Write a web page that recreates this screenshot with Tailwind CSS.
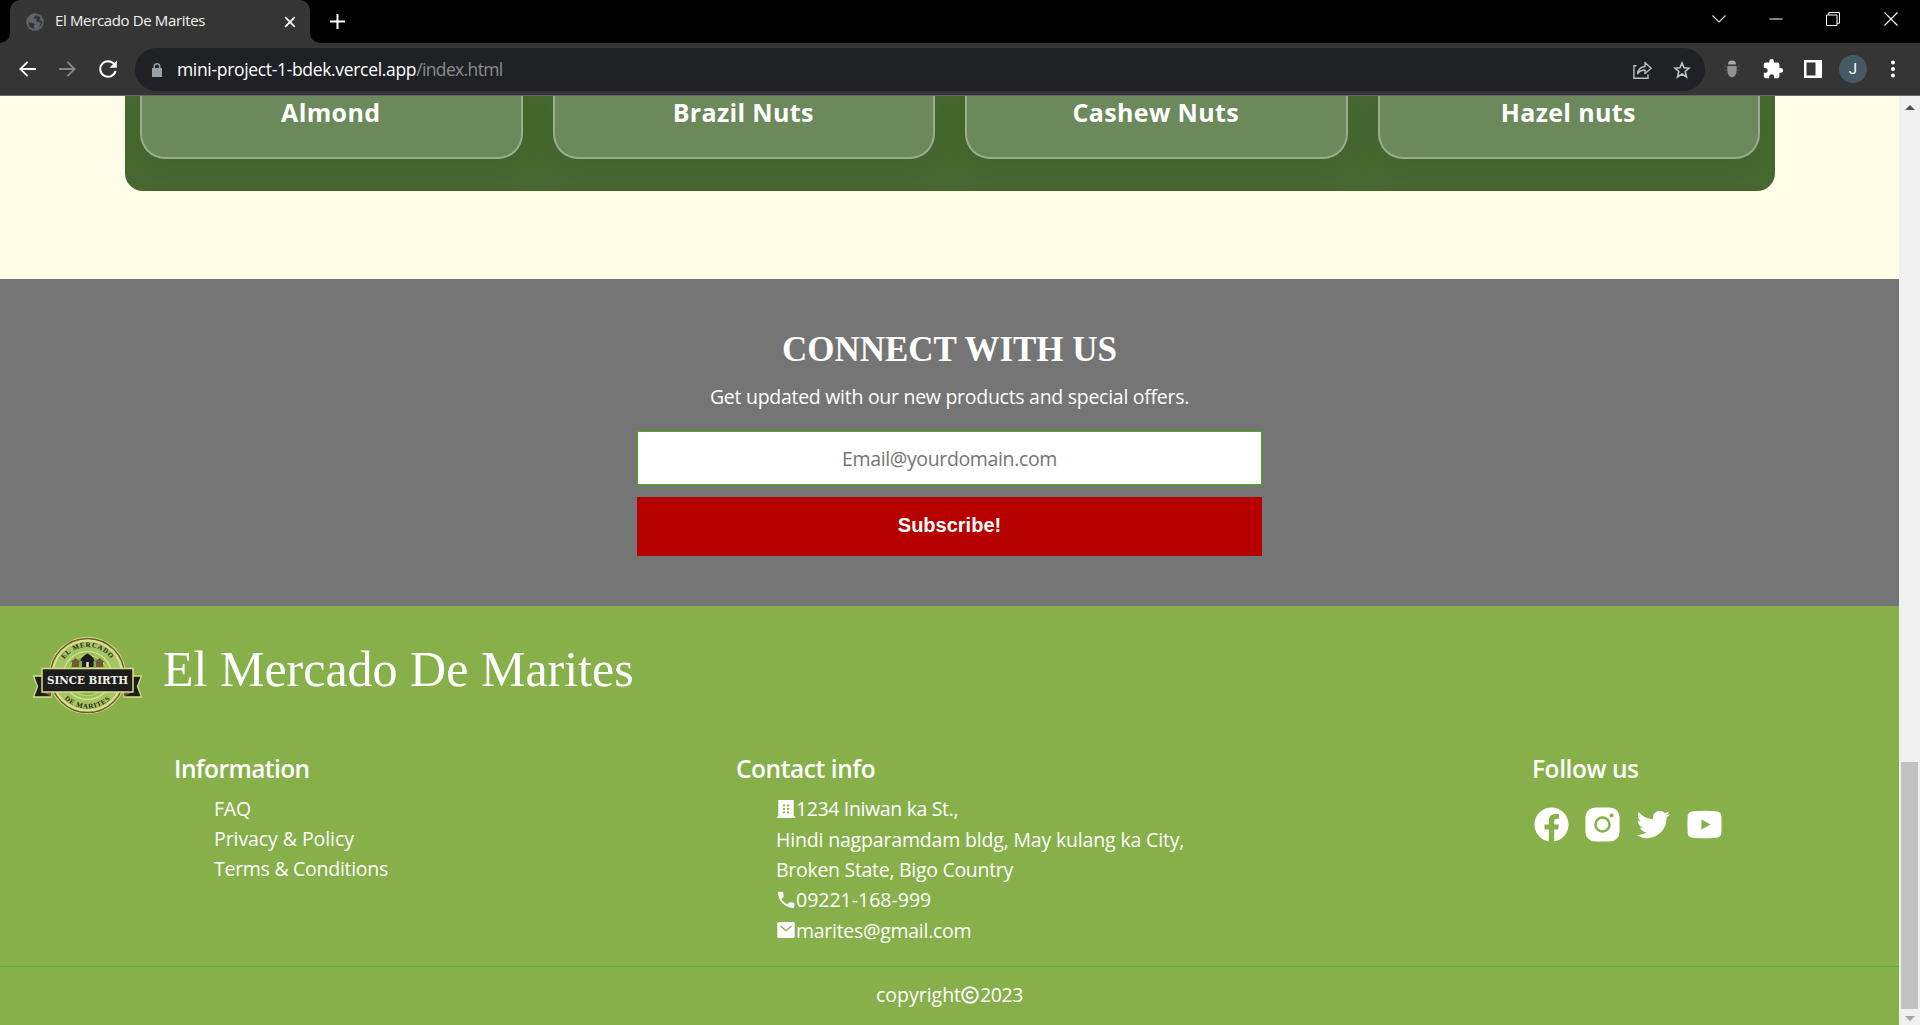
<!DOCTYPE html>
<html lang="en">
<head>
<meta charset="utf-8">
<title>El Mercado De Marites</title>
<script src="https://cdn.jsdelivr.net/npm/@tailwindcss/browser@4"></script>
</head>
<body class="w-[1920px] h-[1025px] overflow-hidden flex flex-col bg-black font-['Open_Sans',sans-serif] text-white">

<!-- Tab strip -->
<header class="h-[43px] shrink-0 flex bg-black">
  <svg class="w-[10px] h-[43px] shrink-0" viewBox="0 0 10 43"><path d="M10 33V43H0A10 10 0 0 0 10 33Z" fill="#353535"/></svg>
  <div class="w-[300px] h-[43px] rounded-t-[10px] bg-[#353535] flex items-center pl-4 pr-3">
    <svg class="w-[18px] h-[18px] shrink-0" viewBox="0 0 18 18"><circle cx="9" cy="9" r="8.8" fill="#5f6368"/><path d="M2.2 9.5 7 9.8 8.8 11.3 7.6 13.2 8.6 15.7A7 7 0 0 1 2.2 9.5ZM10.3 2.2C9.2 3.2 7.4 3.8 8 5.3 9 5.8 10.3 5 10.8 6.5 9.6 8 11 9 13 8.8L14.6 10.5 12.8 14.8A7 7 0 0 0 15.8 8L13.6 6.8 14.2 4.3A7 7 0 0 0 10.3 2.2Z" fill="#353535"/></svg>
    <span class="ml-[11px] text-[15px] leading-[40px] -mt-[3px] tracking-[-0.36px] text-[#f1f1f1] whitespace-nowrap">El Mercado De Marites</span>
    <svg class="ml-auto mr-[2px] w-[12px] h-[12px]" viewBox="0 0 12 12" stroke="#fff" stroke-width="1.8"><path d="M1.2 1.2 10.8 10.8M10.8 1.2 1.2 10.8"/></svg>
  </div>
  <svg class="w-[10px] h-[43px] shrink-0" viewBox="0 0 10 43"><path d="M0 33V43H10A10 10 0 0 1 0 33Z" fill="#353535"/></svg>
  <svg class="ml-[10px] mt-[14px] w-[15px] h-[15px]" viewBox="0 0 15 15" stroke="#fff" stroke-width="2"><path d="M7.5 0V15M0 7.5H15"/></svg>
  <div class="ml-auto flex h-[37px] items-center">
    <div class="w-[57px] flex justify-center"><svg class="w-[14px] h-[14px]" viewBox="0 0 14 14" fill="none" stroke="#ddd" stroke-width="1.1"><path d="M.5 3.5 7 10 13.500 3.500"/></svg></div>
    <div class="w-[57px] flex justify-center"><svg class="w-[14px] h-[14px]" viewBox="0 0 14 14"><path d="M.5 6.500H13.500V7.500H.5Z" fill="#fff"/></svg></div>
    <div class="w-[58px] flex justify-center"><svg class="w-[14px] h-[14px]" viewBox="0 0 14 14" fill="none" stroke="#fff"><path d="M.5 3V13.500H11V3ZM2.800 3V.5H13.500V11.200H11"/></svg></div>
    <div class="w-[58px] flex justify-center"><svg class="w-[14px] h-[14px]" viewBox="0 0 14 14" stroke="#fff" stroke-width="1.1"><path d="M.5.5 13.500 13.500M13.500.5.5 13.500"/></svg></div>
  </div>
</header>

<!-- Toolbar -->
<div class="h-[53px] shrink-0 bg-[#353535] border-b border-[#686868] flex items-start pt-[5px]">
  <div class="h-[43px] w-[135px] shrink-0 flex items-center pl-[19px]">
    <svg class="w-[17px] h-[16px] -mt-px" viewBox="0 0 17 16" fill="none" stroke="#fff" stroke-width="1.9"><path d="M17 8H1.500M8.600.8 1.400 8 8.600 15.200"/></svg>
    <svg class="ml-[23px] w-[17px] h-[16px] -mt-px" viewBox="0 0 17 16" fill="none" stroke="#858585" stroke-width="1.900"><path d="M0 8H15.500M8.400.8 15.600 8 8.400 15.200"/></svg>
    <svg class="ml-[23px] w-[18px] h-[18px] -mt-px" viewBox="0 0 18 18"><path d="M15.300 4.300A7.800 7.800 0 1 0 16.600 11" fill="none" stroke="#fff" stroke-width="2"/><path d="M17.800.6V7.800H10.600Z" fill="#fff"/></svg>
  </div>
  <div class="h-[43px] w-[1570px] shrink-0 rounded-full bg-[#202124] flex items-center pl-[17px] pr-[14px]">
    <svg class="w-[10px] h-[14px]" viewBox="0 0 10 14"><path d="M0 5H1.500V3.500A3.500 3.500 0 0 1 8.500 3.500V5H10V14H0ZM3 5H7V3.500A2 2 0 0 0 3 3.500Z" fill="#9aa0a6"/></svg>
    <p class="ml-[15px] text-[17.5px] leading-[43px] whitespace-nowrap tracking-[-0.33px]">mini-project-1-bdek.vercel.app<span class="text-[#8b8d90] tracking-[-0.63px]">/index.html</span></p>
    <svg class="ml-auto w-[19px] h-[18px]" viewBox="0 0 19 18" fill="none" stroke="#bdbdbd" stroke-width="1.400"><path d="M3.500 4.700H.9V17.200H15V13.500"/><path d="M4.500 12.800C5 8.500 7.500 6 12 5.500V1.500L18.200 7.200 12 12.500V9C8.500 9 6.500 10 4.500 12.800Z" stroke-linejoin="round"/></svg>
    <svg class="ml-[21px] w-[18px] h-[18px]" viewBox="0 0 18 18" fill="none" stroke="#c4c4c4" stroke-width="1.600"><path d="M9 1.900 11 6.700 16.200 7.100 12.200 10.500 13.500 15.900 9 13 4.500 15.900 5.800 10.500 1.800 7.100 7 6.700Z"/></svg>
  </div>
  <div class="h-[43px] flex items-center pl-[7px] -mt-px">
    <div class="w-10 flex justify-center"><svg class="w-4 h-[18px]" viewBox="0 0 16 18"><path d="M4 4.500A4 4 0 0 1 12 4.500Z" fill="#aaa"/><path d="M3.500 6H12.500C13.300 10 12.500 17 8 17.300 3.500 17 2.700 10 3.500 6Z" fill="#919191"/><path d="M0 5.500 3 7M16 5.500 13 7M0 10H3M16 10H13M.5 15 3.500 13M15.500 15 12.500 13" stroke="#505050"/></svg></div>
    <div class="w-[41px] flex justify-center"><svg class="w-[22px] h-[22px]" viewBox="0 0 24 24" fill="#fff"><path d="M20.500 11H19V7c0-1.100-.9-2-2-2h-4V3.500a2.500 2.500 0 0 0-5 0V5H4c-1.100 0-1.990.9-1.990 2v3.800H3.500c1.490 0 2.700 1.210 2.700 2.700s-1.210 2.700-2.700 2.700H2V20c0 1.100.9 2 2 2h3.800v-1.500c0-1.490 1.210-2.700 2.700-2.700 1.490 0 2.700 1.210 2.700 2.700V22H17c1.100 0 2-.9 2-2v-4h1.500a2.500 2.500 0 0 0 0-5z"/></svg></div>
    <div class="w-[40px] flex justify-center"><svg class="w-[18px] h-[18px]" viewBox="0 0 18 18"><path fill-rule="evenodd" d="M0 0H18V18H0ZM2.500 2.500V15.500H11.500V2.500Z" fill="#fff"/></svg></div>
    <div class="w-[40px] flex justify-center"><div class="w-7 h-7 rounded-full bg-[#455a64] text-center text-[15px] leading-[28px] font-['Roboto',sans-serif]">J</div></div>
    <div class="w-[40px] flex justify-center"><svg class="w-1 h-[18px]" viewBox="0 0 4 18" fill="#fff"><circle cx="2" cy="2.500" r="2"/><circle cx="2" cy="9" r="2"/><circle cx="2" cy="15.500" r="2"/></svg></div>
  </div>
</div>

<div class="flex h-[929px] shrink-0">
<main class="w-[1899px] shrink-0 bg-[#fffde8] flex flex-col">

  <!-- Products -->
  <section class="h-[183px] shrink-0 pl-[125px] pr-[124px]">
    <div class="h-[95px] rounded-b-[18px] bg-[#476930] flex overflow-hidden px-[15px] gap-[30px] text-center text-[25px] leading-[32px] font-bold tracking-[0.36px]">
      <div class="flex-1 h-[63px] rounded-b-[25px] border-2 border-t-0 border-[#9aad8e] bg-[#6c895c] shadow-[0_8px_32px_0_rgba(31,58,20,0.13)] pr-px">Almond</div>
      <div class="flex-1 h-[63px] rounded-b-[25px] border-2 border-t-0 border-[#9aad8e] bg-[#6c895c] shadow-[0_8px_32px_0_rgba(31,58,20,0.13)] pr-px">Brazil Nuts</div>
      <div class="flex-1 h-[63px] rounded-b-[25px] border-2 border-t-0 border-[#9aad8e] bg-[#6c895c] shadow-[0_8px_32px_0_rgba(31,58,20,0.13)] pr-px">Cashew Nuts</div>
      <div class="flex-1 h-[63px] rounded-b-[25px] border-2 border-t-0 border-[#9aad8e] bg-[#6c895c] shadow-[0_8px_32px_0_rgba(31,58,20,0.13)] pr-px">Hazel nuts</div>
    </div>
  </section>

  <!-- Newsletter -->
  <section class="h-[327px] shrink-0 bg-[#757575] flex flex-col items-center pt-[51px]">
    <h2 class="font-['Liberation_Serif',serif] font-bold text-[35px] leading-[40px]">CONNECT WITH US</h2>
    <p class="mt-[11px] text-[19.5px] leading-[32px] tracking-[-0.28px]">Get updated with our new products and special offers.</p>
    <div class="mt-[18px] w-[625px] h-[54px] border border-[#42b300] bg-white text-[#757575] text-center text-[19.5px] leading-[53px] tracking-[-0.36px]">Email@yourdomain.com</div>
    <button class="mt-3 w-[625px] h-[59px] pb-[3px] bg-[#b60000] font-['Liberation_Sans',sans-serif] font-bold text-[20px] leading-[56px]">Subscribe!</button>
  </section>

  <!-- Footer -->
  <footer class="h-[419px] shrink-0 bg-[#87b04a] flex flex-col">
    <div class="flex pt-[29px] pl-[32px] h-[146px] shrink-0">
      <svg class="w-[111px] h-[81px] shrink-0" viewBox="0 0 111 81">
        <defs><path id="arcTop" d="M27.500 40A28 28 0 0 1 83.500 40"/><path id="arcBot" d="M22.500 40.500A33 33 0 0 0 88.500 40.500"/></defs>
        <circle cx="55.500" cy="40.500" r="38.800" fill="#d7dd8b"/>
        <circle cx="55.500" cy="40.500" r="37" fill="none" stroke="#705a34" stroke-width="1.500"/>
        <circle cx="55.500" cy="40.500" r="34.500" fill="#a5c565"/>
        <circle cx="55.500" cy="40.500" r="34.500" fill="none" stroke="#e0e494" stroke-width="1"/>
        <circle cx="55.500" cy="40.500" r="24" fill="#9cc25c" stroke="#e0e494" stroke-width="1.200"/>
        <circle cx="55.500" cy="40.500" r="20" fill="#87b04a" stroke="#c8d97c" stroke-width="1"/>
        <text font-family="Liberation Serif" font-weight="700" font-size="7" letter-spacing=".7" fill="#25280f" text-anchor="middle"><textPath href="#arcTop" startOffset="50%">EL MERCADO</textPath></text>
        <text font-family="Liberation Serif" font-weight="700" font-size="7" letter-spacing=".7" fill="#25280f" text-anchor="middle"><textPath href="#arcBot" startOffset="50%">DE MARITES</textPath></text>
        <path d="M40 32V27L38.500 27 43.500 23 48.500 27 47 27V32ZM64 32V27L62.500 27 67.500 23 72.500 27 71 27V32Z" fill="#705a34"/>
        <path d="M50 32V26H48.500C49.500 22 52 20.500 55.500 18.500 59 20.500 61.500 22 62.500 26H61.500V32Z" fill="#1d1d1d"/><path d="M54.200 27H56.800V32H54.200Z" fill="#dfe3a0"/>
        <path d="M1.500 41H19V62H1.500L5.500 51.500ZM109.500 41H92V62H109.500L105.500 51.500Z" fill="#1d1d1d" stroke="#d7dd8b" stroke-width="1.300"/>
        <path d="M10 57H19V61.500ZM101 57H92V61.500Z" fill="#705a34"/>
        <path d="M10 33.500H101V57H10Z" fill="#1d1d1d" stroke="#d7dd8b" stroke-width="1.500"/>
        <text x="55.500" y="49.300" font-family="DejaVu Serif" font-weight="700" font-size="11.500" textLength="81" lengthAdjust="spacingAndGlyphs" text-anchor="middle" fill="#f2f2ea">SINCE BIRTH</text>
      </svg>
      <h1 class="ml-5 mt-[5px] font-['Liberation_Serif',serif] text-[50px] leading-[58px] h-[58px]">El Mercado De Marites</h1>
    </div>

    <div class="flex h-[214px] shrink-0 pl-[174px] text-[19.5px] leading-[30px] whitespace-nowrap">
      <div class="w-[562px]">
        <h3 class="font-semibold text-[24.5px] leading-[33px] tracking-[-0.6px]">Information</h3>
        <ul class="mt-[9px] pl-[40px]">
          <li class="tracking-[-0.19px]">FAQ</li>
          <li class="tracking-[-0.07px]">Privacy &amp; Policy</li>
          <li class="tracking-[-0.28px]">Terms &amp; Conditions</li>
        </ul>
      </div>
      <div class="w-[796px]">
        <h3 class="font-semibold text-[24.5px] leading-[33px] tracking-[-0.43px]">Contact info</h3>
        <ul class="mt-[9px] pl-[40px]">
          <li class="flex items-center tracking-[-0.36px] h-[31px]"><svg class="w-[20px] h-[20px] -mt-px" viewBox="0 0 20 20"><path d="M2.300 1H17.700V17.500H19.200V19H.8V17.500H2.300Z" fill="#fff"/><path d="M7 5.500H9V7.200H7ZM11 5.500H13V7.200H11ZM7 9H9V10.700H7ZM11 9H13V10.700H11ZM7 12.500H9V14.200H7ZM11 12.500H13V14.200H11Z" fill="#87b04a"/></svg><span class="h-[30px] -mt-px">1234 Iniwan ka St.,</span></li>
          <li class="tracking-[-0.17px]">Hindi nagparamdam bldg, May kulang ka City,</li>
          <li class="tracking-[-0.29px]">Broken State, Bigo Country</li>
          <li class="flex items-center"><svg class="w-[20px] h-[20px] -mt-px" viewBox="0 0 20 20"><path d="M17.500 12.700 14 12.300C13.600 12.300 13.200 12.400 12.900 12.700L11.200 14.400C8.800 13.200 6.800 11.200 5.600 8.800L7.300 7.100C7.600 6.800 7.700 6.400 7.700 6L7.300 2.600C7.200 2 6.700 1.700 6.100 1.700H3.300C2.500 1.700 2 2.300 2 3.100 2.500 11.200 8.800 17.500 16.900 18 17.700 18 18.300 17.500 18.300 16.700V13.800C18.300 13.200 18 12.700 17.500 12.700Z" fill="#fff"/></svg><span>09221-168-999</span></li>
          <li class="flex items-center tracking-[-0.28px] h-[31px]"><svg class="w-[20px] h-[20px] -mt-px" viewBox="0 0 20 20"><rect x="1.300" y="2" width="17.400" height="16" rx="1.300" fill="#fff"/><path d="M4.500 6 10 10.700 15.500 6" fill="none" stroke="#87b04a" stroke-width="1.400"/></svg><span>marites@gmail.com</span></li>
        </ul>
      </div>
      <div>
        <h3 class="font-semibold text-[24.5px] leading-[33px] tracking-[-0.43px]">Follow us</h3>
        <div class="mt-[19px] flex gap-[10px] -ml-px">
          <svg class="w-[41px] h-[41px]" viewBox="0 0 24 24" fill="#fff"><path d="M12.001 2.002c-5.522 0-9.999 4.477-9.999 9.999 0 4.990 3.656 9.126 8.437 9.879v-6.988h-2.540v-2.891h2.540V9.798c0-2.508 1.493-3.891 3.776-3.891 1.094 0 2.240.195 2.240.195v2.459h-1.264c-1.240 0-1.628.772-1.628 1.563v1.875h2.771l-.443 2.891h-2.328v6.988C18.344 21.129 22 16.992 22 12.001c0-5.522-4.477-9.999-9.999-9.999z"/></svg>
          <svg class="w-[41px] h-[41px]" viewBox="0 0 24 24"><rect x="2" y="2" width="20" height="20" rx="5.800" fill="#fff"/><circle cx="12" cy="12" r="4.100" fill="none" stroke="#87b04a" stroke-width="1.500"/><circle cx="17.300" cy="6.700" r="1.200" fill="#87b04a"/></svg>
          <svg class="w-[41px] h-[41px]" viewBox="0 0 24 24" fill="#fff"><path d="M19.633 7.997c.013.175.013.349.013.523 0 5.325-4.053 11.461-11.460 11.461-2.282 0-4.402-.661-6.186-1.809.324.037.636.050.973.050a8.070 8.070 0 0 0 5.001-1.721 4.036 4.036 0 0 1-3.767-2.793c.249.037.499.062.761.062.361 0 .724-.050 1.061-.137a4.027 4.027 0 0 1-3.230-3.953v-.050c.537.299 1.160.486 1.820.511a4.022 4.022 0 0 1-1.796-3.354c0-.748.199-1.434.548-2.032a11.457 11.457 0 0 0 8.306 4.215c-.062-.300-.100-.611-.100-.923a4.026 4.026 0 0 1 4.028-4.028c1.160 0 2.207.486 2.943 1.272a7.957 7.957 0 0 0 2.556-.973 4.020 4.020 0 0 1-1.771 2.220 8.073 8.073 0 0 0 2.319-.624 8.645 8.645 0 0 1-2.019 2.083z"/></svg>
          <svg class="w-[41px] h-[41px]" viewBox="0 0 24 24"><path d="M5.500 4.200Q12 3.600 18.500 4.200C21 4.400 21.800 5.500 21.900 7.500Q22.100 12 21.900 16.500C21.800 18.500 21 19.600 18.500 19.800Q12 20.400 5.500 19.800C3 19.600 2.200 18.500 2.100 16.500Q1.900 12 2.100 7.500C2.200 5.500 3 4.400 5.500 4.200Z" fill="#fff"/><path d="M10.200 8.900V15.100L15.500 12Z" fill="#87b04a"/></svg>
        </div>
      </div>
    </div>

    <div class="h-[59px] border-t border-[#4caf50] flex items-center justify-center text-[19.5px] leading-[58px] pb-[3px]">
      <span>copyright</span>
      <svg class="-ml-px w-[20px] h-[20px]" viewBox="0 0 20 20" fill="none" stroke="#fff"><circle cx="10" cy="10" r="7.800" stroke-width="2"/><path d="M12.800 8.200A3.300 3.300 0 1 0 12.800 11.800" stroke-width="1.900"/></svg>
      <span class="tracking-[-0.4px]">2023</span>
    </div>
  </footer>
</main>

<!-- Scrollbar -->
<aside class="w-[21px] bg-[#f0f0f0] flex flex-col items-center">
  <svg class="mt-[9px] w-[10px] h-[5px] shrink-0" viewBox="0 0 10 5"><path d="M5 0 10 5H0Z" fill="#505050"/></svg>
  <div class="mt-[652px] w-[17px] h-[247px] bg-[#c1c1c1] shrink-0"></div>
  <svg class="mt-[7px] w-[10px] h-[5px] shrink-0" viewBox="0 0 10 5"><path d="M0 0H10L5 5Z" fill="#a3a3a3"/></svg>
</aside>
</div>
</body>
</html>
